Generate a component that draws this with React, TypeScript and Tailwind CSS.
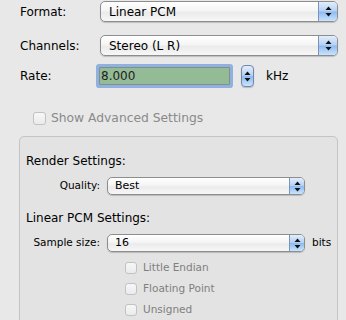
import React from "react";

const FONT = "font-['DejaVu_Sans','Liberation_Sans',sans-serif]";

// little up/down arrows used in the aqua popup button and the stepper
function Arrows() {
  return (
    <svg width="7" height="11" viewBox="0 0 7 11" className="block">
      <path d="M3.5 0.5 L6.5 4 L0.5 4 Z" fill="#111" />
      <path d="M0.5 7 L6.5 7 L3.5 10.5 Z" fill="#111" />
    </svg>
  );
}

interface PopupProps {
  value: string;
  small?: boolean;
  width: number;
}

function Popup({ value, small, width }: PopupProps) {
  return (
    <div
      className={
        "flex items-stretch rounded-[5px] border border-[#8d8d8d] shadow-[0_1px_1px_rgba(0,0,0,0.18)] bg-[linear-gradient(to_bottom,#ffffff_0%,#f5f5f5_45%,#ebebeb_55%,#f7f7f7_100%)] " +
        (small ? "h-[18px]" : "h-[21px]")
      }
      style={{ width }}
    >
      <span
        className={
          "flex-1 flex items-center text-black " +
          (small ? "pl-[7px] text-[11px]" : "pl-[8px] text-[12px]")
        }
      >
        {value}
      </span>
      <div
        className={
          "flex items-center justify-center rounded-r-[4px] border-l border-[#7c92b6] bg-[linear-gradient(to_bottom,#e3eefc_0%,#b3d0f4_48%,#8dbbf1_52%,#c9e4fd_100%)] " +
          (small ? "w-[15px]" : "w-[19px]")
        }
      >
        <Arrows />
      </div>
    </div>
  );
}

function Checkbox({ label, small }: { label: string; small?: boolean }) {
  return (
    <div className="flex items-center">
      <div
        className={
          "rounded-[3px] border border-[#c2c2c2] bg-[linear-gradient(to_bottom,#f7f7f7,#ebebeb)] " +
          (small ? "w-[12px] h-[12px]" : "w-[13px] h-[13px]")
        }
      />
      <span
        className={
          small
            ? "ml-[6px] text-[10.5px] text-[#7f7f7f]"
            : "ml-[5px] text-[12.3px] text-[#8a8a8a]"
        }
      >
        {label}
      </span>
    </div>
  );
}

export default function App() {
  return (
    <div
      className={
        "w-[346px] h-[320px] overflow-hidden bg-[#e8e8e8] text-black " + FONT
      }
    >
      <div className="mt-[1px] flex items-center h-[21px]">
        <span className="w-[100px] pl-[20px] text-[12px]">Format:</span>
        <Popup value="Linear PCM" width={238} />
      </div>

      <div className="mt-[13px] flex items-center h-[21px]">
        <span className="w-[100px] pl-[20px] text-[12px]">Channels:</span>
        <Popup value="Stereo (L R)" width={238} />
      </div>

      <div className="mt-[8px] flex items-center h-[24px]">
        <span className="w-[99px] pl-[20px] text-[12px]">Rate:</span>
        <div className="w-[131px] h-[18px] flex items-center border border-[#8a8a8a] bg-[#93bb95] shadow-[0_0_0_3px_rgba(112,160,222,0.75)] rounded-[1px]">
          <span className="pl-[1px] text-[12px] text-[#222]">8.000</span>
        </div>
        <div className="ml-[11px] w-[13px] h-[22px] flex items-center justify-center rounded-[4px] border border-[#6f86ae] bg-[linear-gradient(to_bottom,#e3eefc_0%,#b3d0f4_48%,#8dbbf1_52%,#c9e4fd_100%)] shadow-[0_1px_1px_rgba(0,0,0,0.2)]">
          <Arrows />
        </div>
        <span className="ml-[12px] text-[12px]">kHz</span>
      </div>

      <div className="mt-[24px] ml-[33px] h-[13px] flex items-center">
        <Checkbox label="Show Advanced Settings" />
      </div>

      <div className="mt-[11px] ml-[19px] w-[319px] h-[200px] rounded-[5px] border border-[#c4c4c4] bg-[#e3e3e3]">
        <div className="mt-[16px] pl-[6px] h-[16px] flex items-center text-[12px]">
          Render Settings:
        </div>

        <div className="mt-[8px] flex items-center h-[18px]">
          <span className="w-[80px] text-right text-[10.5px]">Quality:</span>
          <div className="ml-[7px]">
            <Popup value="Best" width={198} small />
          </div>
        </div>

        <div className="mt-[15px] pl-[6px] h-[16px] flex items-center text-[12px]">
          Linear PCM Settings:
        </div>

        <div className="mt-[8px] flex items-center h-[18px]">
          <span className="w-[80px] text-right text-[10.5px]">Sample size:</span>
          <div className="ml-[7px]">
            <Popup value="16" width={198} small />
          </div>
          <span className="ml-[7px] text-[10.5px]">bits</span>
        </div>

        <div className="mt-[5px] ml-[105px]">
          <div className="h-[21px] flex items-center">
            <Checkbox label="Little Endian" small />
          </div>
          <div className="h-[21px] flex items-center">
            <Checkbox label="Floating Point" small />
          </div>
          <div className="h-[21px] flex items-center">
            <Checkbox label="Unsigned" small />
          </div>
        </div>
      </div>
    </div>
  );
}
